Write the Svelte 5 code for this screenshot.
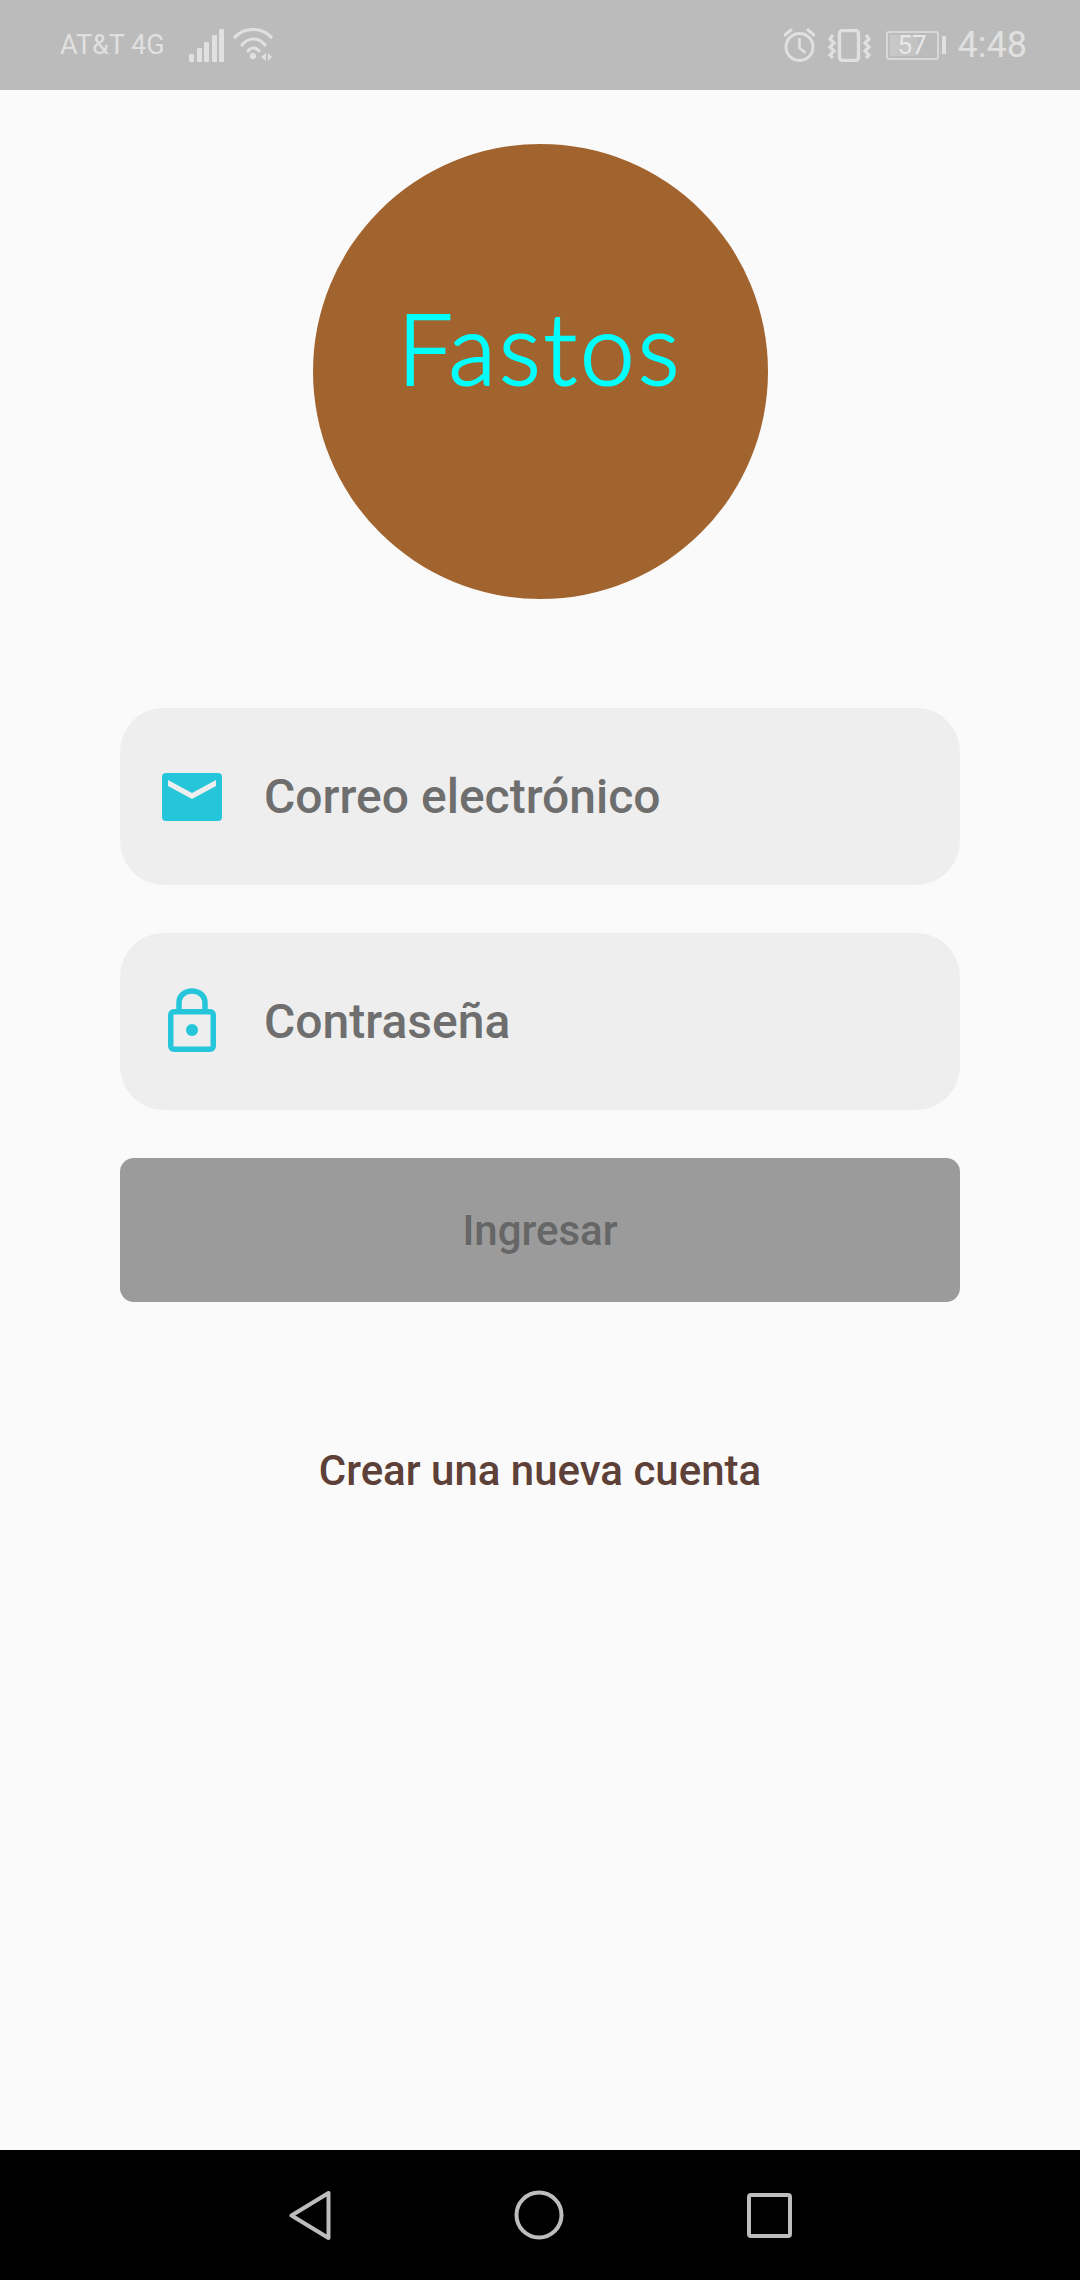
<script>
  const fields = [
    { label: 'Correo electrónico', icon: 'mail' },
    { label: 'Contraseña', icon: 'lock' }
  ];
  const bars = [
    { x: 1, y: 25 },
    { x: 9, y: 19 },
    { x: 16, y: 13 },
    { x: 24, y: 6 },
    { x: 31, y: 0 }
  ];
</script>

<div class="screen">
  <header class="status">
    <div class="side">
      <span class="carrier">AT&amp;T 4G</span>
      <svg class="signal" width="36" height="33" viewBox="0 0 36 33" fill="#e0e0e0">
        {#each bars as b}
          <rect x={b.x} y={b.y} width="5" height={33 - b.y} rx="1" />
        {/each}
      </svg>
      <svg class="wifi" width="40" height="35" viewBox="0 0 40 35" fill="none" stroke="#e0e0e0" stroke-width="3.2" stroke-linecap="round">
        <path d="M2 9C12 -1 28 -1 38 9" />
        <path d="M9 17C15 9 26 9 32 17" />
        <path d="M15 23C18 19 23 19 26 23" />
        <circle cx="20" cy="28" r="3.2" fill="#e0e0e0" stroke="none" />
        <path d="M33 25v8l-5-4z M35 25v8l4-4z" stroke="none" fill="#e0e0e0" />
      </svg>
    </div>
    <div class="side">
      <svg class="alarm" width="31" height="34" viewBox="0 0 31 34" fill="none" stroke="#e0e0e0" stroke-width="3">
        <circle cx="15.5" cy="19" r="13.5" />
        <path d="M15.5 10v10l6 5" stroke-width="2.6" />
        <path d="M1 7l6-5M30 7l-6-5" stroke-linecap="round" />
      </svg>
      <svg class="vibrate" width="43" height="33" viewBox="0 0 43 33" fill="none" stroke="#e0e0e0">
        <rect x="11.5" y="1.5" width="19" height="30" rx="3" stroke-width="3.4" />
        <path d="M5 6L2 10L6 14L2 18L6 22L2 26L5 29M38 6L41 10L37 14L41 18L37 22L41 26L38 29" stroke-width="3.2" />
      </svg>
      <div class="battery">
        <div class="cell">
          <span class="fill"></span>
          <span class="pct">57</span>
        </div>
        <span class="nub"></span>
      </div>
      <span class="time">4:48</span>
    </div>
  </header>

  <main class="content">
    <div class="logo"><span>Fastos</span></div>

    <form class="form" onsubmit={(e) => e.preventDefault()}>
      {#each fields as f}
        <div class="field">
          <span class="icon">
            {#if f.icon === 'mail'}
              <svg width="60" height="48" viewBox="0 0 60 48">
                <rect width="60" height="48" rx="4" fill="#26c6da" />
                <path d="M6 7L30 20L54 7V13L30 26L6 13Z" fill="#eeeeee" />
              </svg>
            {:else}
              <svg width="48" height="67" viewBox="0 0 48 67" fill="none" stroke="#26c6da">
                <path d="M11 23V15C11 -1 37 -1 37 15V23" stroke-width="5.5" />
                <rect x="2.75" y="23.75" width="42.5" height="37.5" rx="3" stroke-width="5.5" />
                <circle cx="24" cy="42" r="6" fill="#26c6da" stroke="none" />
              </svg>
            {/if}
          </span>
          <span class="label">{f.label}</span>
        </div>
      {/each}
      <button class="submit" type="button">Ingresar</button>
    </form>

    <a class="create" href="#crear">Crear una nueva cuenta</a>
  </main>

  <nav class="nav">
    <svg width="42" height="49" viewBox="0 0 42 49" fill="none" stroke="#bdbdbd" stroke-width="4" stroke-linejoin="round">
      <path d="M2.5 24.5L39.5 2V47Z" />
    </svg>
    <svg width="50" height="50" viewBox="0 0 50 50" fill="none" stroke="#bdbdbd" stroke-width="4">
      <circle cx="25" cy="25" r="22.5" />
    </svg>
    <svg width="45" height="45" viewBox="0 0 45 45" fill="none" stroke="#bdbdbd" stroke-width="4" stroke-linejoin="round">
      <rect x="2" y="2" width="41" height="41" rx="2" />
    </svg>
  </nav>
</div>

<style>
  :global(body) {
    margin: 0;
    background: #fafafa;
  }

  .screen {
    width: 1080px;
    height: 2280px;
    display: flex;
    flex-direction: column;
    background: #fafafa;
    font-family: Roboto, "Liberation Sans", sans-serif;
    overflow: hidden;
  }

  .status {
    height: 90px;
    flex: none;
    box-sizing: border-box;
    padding: 0 53px 0 60px;
    display: flex;
    align-items: center;
    justify-content: space-between;
    background: #bbbbbb;
    color: #e0e0e0;
  }

  .side {
    display: flex;
    align-items: center;
  }

  .carrier {
    font-size: 27px;
    margin-right: 23px;
  }

  .signal { margin-right: 9px; }

  .alarm { margin-top: -1px; }

  .vibrate { margin: 0 15px 0 13px; }

  .battery {
    display: flex;
    align-items: center;
    gap: 3px;
    margin-right: 12px;
  }

  .cell {
    position: relative;
    box-sizing: border-box;
    width: 53px;
    height: 29px;
    border: 2px solid #d8d8d8;
    border-radius: 3px;
    display: flex;
    align-items: center;
    justify-content: center;
  }

  .fill {
    position: absolute;
    left: 2px;
    top: 2px;
    bottom: 2px;
    width: 28px;
    background: linear-gradient(90deg, #c8c8c8, #c2c2c2);
  }

  .pct {
    position: relative;
    font-size: 26px;
    color: #e8e8e8;
  }

  .nub {
    width: 4px;
    height: 18px;
    background: #e0e0e0;
  }

  .time {
    font-size: 36px;
  }

  .content {
    flex: 1;
    display: flex;
    flex-direction: column;
    align-items: center;
    padding-top: 54px;
  }

  .logo {
    width: 455px;
    height: 455px;
    border-radius: 50%;
    background: #a2642e;
    color: #00ffff;
    display: flex;
    justify-content: center;
    padding-top: 145px;
    box-sizing: border-box;
    font-family: Lato, sans-serif;
    font-weight: 300;
    font-size: 98px;
    line-height: 1.2;
    letter-spacing: 3px;
    -webkit-text-stroke: 2px #00ffff;
  }

  .form {
    width: 840px;
    margin-top: 109px;
    display: flex;
    flex-direction: column;
    gap: 48px;
  }

  .field {
    height: 177px;
    box-sizing: border-box;
    padding-left: 41px;
    display: flex;
    align-items: center;
    border-radius: 44px;
    background: #eeeeee;
  }

  .icon {
    width: 62px;
    height: 67px;
    display: flex;
    align-items: center;
    justify-content: center;
    margin-right: 41px;
  }

  .icon svg { display: block; }

  .label {
    font-size: 48px;
    font-weight: 500;
    color: #6e6e6e;
  }

  .submit {
    height: 144px;
    border: 0;
    border-radius: 14px;
    background: #9b9b9b;
    color: #666666;
    font: 500 42px Roboto, sans-serif;
  }

  .create {
    margin-top: 142px;
    font-size: 42px;
    font-weight: 500;
    color: #5d4037;
    text-decoration: none;
    line-height: 54px;
  }

  .nav {
    height: 130px;
    flex: none;
    background: #000;
    display: flex;
    align-items: center;
    justify-content: center;
    gap: 183px;
  }
</style>
